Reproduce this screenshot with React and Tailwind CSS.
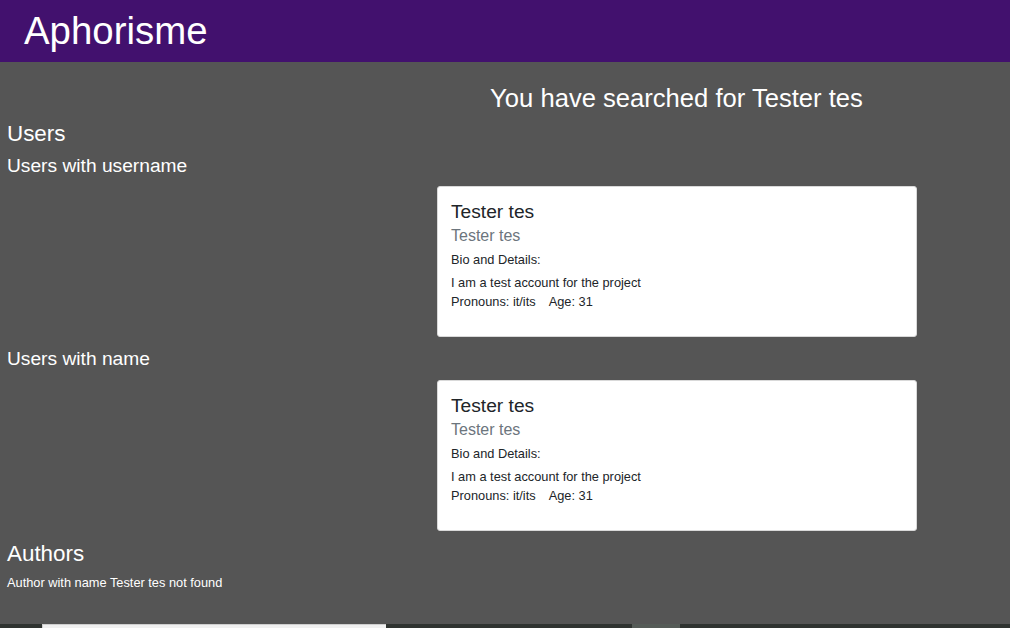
import React from "react";

const font = { fontFamily: '"Liberation Sans", Arial, sans-serif' };

function UserCard({ name, username, bio, pronouns, age }) {
  return (
    <div className="ml-[437px] w-[480px] h-[151px] bg-white border border-[#d9d9d9] rounded-[3px] pt-[13px] px-[13px]">
      <div className="text-[19.2px] leading-[1.2] text-[#212529]">{name}</div>
      <div className="mt-[3px] text-[16px] leading-[1.2] text-[#6c757d]">{username}</div>
      <div className="mt-[5px] text-[12.8px] leading-[1.5] text-[#212529]">Bio and Details:</div>
      <div className="mt-[4px] text-[12.8px] leading-[1.5] text-[#212529]">
        <div>{bio}</div>
        <div>
          <span className="mr-[13px]">Pronouns: {pronouns}</span>
          <span>Age: {age}</span>
        </div>
      </div>
    </div>
  );
}

export default function App() {
  const user = {
    name: "Tester tes",
    username: "Tester tes",
    bio: "I am a test account for the project",
    pronouns: "it/its",
    age: 31,
  };

  return (
    <div className="w-[1010px] h-[628px] overflow-hidden bg-[#555555] flex flex-col" style={font}>
      {/* Navbar */}
      <header className="h-[62px] shrink-0 bg-[#42116e] flex items-center pl-[24px]">
        <h1 className="text-[38.4px] leading-[1.15] text-white">Aphorisme</h1>
      </header>

      <main className="pt-[21px] px-[7px] text-white">
        <div className="-mx-[7px] grid grid-cols-[343px_1fr]">
          <div />
          <h2 className="text-[25.6px] leading-[1.2] text-center">You have searched for Tester tes</h2>
        </div>

        {/* Users */}
        <h3 className="mt-[7px] text-[22.4px] leading-[1.2]">Users</h3>
        <h4 className="mt-[6px] mb-[9px] text-[19.2px] leading-[1.2]">Users with username</h4>
        <div className="-ml-[7px]">
          <UserCard {...user} />
        </div>

        <h4 className="mt-[10px] mb-[10px] text-[19.2px] leading-[1.2]">Users with name</h4>
        <div className="-ml-[7px]">
          <UserCard {...user} />
        </div>

        {/* Authors */}
        <h3 className="mt-[10px] text-[22.4px] leading-[1.2]">Authors</h3>
        <p className="mt-[5px] text-[12.8px] leading-[1.5]">Author with name Tester tes not found</p>
      </main>

      {/* Footer edge */}
      <footer className="mt-auto h-[4px] shrink-0 bg-[#2f3330] flex">
        <div className="ml-[42px] w-[344px] bg-[#f0f0f0] border-t border-l border-[#cfcfcf]" />
        <div className="ml-[246px] w-[48px] bg-[#555b57]" />
      </footer>
    </div>
  );
}
